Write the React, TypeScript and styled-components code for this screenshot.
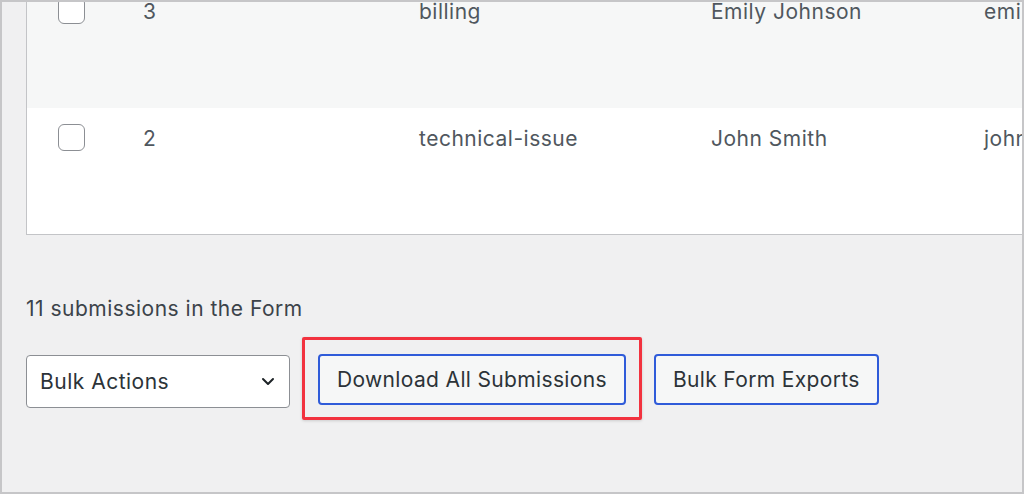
import React from 'react';
import styled, { createGlobalStyle } from 'styled-components';

const GlobalStyle = createGlobalStyle`
  html, body {
    margin: 0;
    padding: 0;
    background: #ffffff;
  }
  * {
    box-sizing: border-box;
  }
`;

const Frame = styled.div`
  width: 1024px;
  height: 494px;
  border: 2px solid #c6c6c8;
  background: #f0f0f1;
  overflow: hidden;
  padding-left: 24px;
  font-family: Inter, 'Noto Sans', 'Liberation Sans', sans-serif;
  font-size: 21px;
  letter-spacing: 0.5px;
`;

const Table = styled.div`
  width: 1100px;
  margin-top: -22px;
  border: 1px solid #c3c4c7;
  background: #ffffff;
`;

const Row = styled.div<{ $alt?: boolean }>`
  display: grid;
  grid-template-columns: 116px 276px 292px 273px 1fr;
  height: ${(p) => (p.$alt ? 127 : 126)}px;
  background: ${(p) => (p.$alt ? '#f6f7f7' : '#ffffff')};
`;

const Cell = styled.div`
  padding-top: 17px;
  line-height: 28px;
  color: #50575e;
  white-space: nowrap;
`;

const CheckCell = styled.div`
  padding-top: 16px;
  padding-left: 31px;
`;

const Checkbox = styled.span`
  display: block;
  width: 27px;
  height: 27px;
  border: 1.5px solid #8c8f94;
  border-radius: 6px;
  background: #ffffff;
`;

const Count = styled.div`
  margin-top: 60px;
  line-height: 28px;
  color: #3c434a;
`;

const Actions = styled.div`
  display: flex;
  align-items: flex-start;
  gap: 12px;
  margin-top: 14px;
`;

const Select = styled.div`
  margin-top: 18px;
  width: 264px;
  height: 53px;
  display: flex;
  align-items: center;
  justify-content: space-between;
  padding: 0 14px 0 13px;
  background: #ffffff;
  border: 1.5px solid #8c8f94;
  border-radius: 4px;
  color: #2c3338;
`;

const Highlight = styled.div`
  border: 3px solid #f2323f;
  border-radius: 2px;
  padding: 14px 13px 12px 13px;
  box-shadow: 0 1px 3px rgba(0, 0, 0, 0.15);
`;

const Button = styled.div<{ $offset?: number }>`
  margin-top: ${(p) => p.$offset ?? 0}px;
  height: 51px;
  display: flex;
  align-items: center;
  padding: 0 17px;
  border: 2px solid #2f5bd9;
  border-radius: 4px;
  background: #f6f7f7;
  color: #2c3338;
  letter-spacing: 0.35px;
  white-space: nowrap;
`;

const rows = [
  { id: '3', type: 'billing', name: 'Emily Johnson', email: 'emily@example.com', alt: true },
  { id: '2', type: 'technical-issue', name: 'John Smith', email: 'john@example.com', alt: false },
];

function Chevron(): JSX.Element {
  return (
    <svg width="14" height="9" viewBox="0 0 14 9" fill="none">
      <path d="M2 2l5 5 5-5" stroke="#1d2327" strokeWidth="2" strokeLinecap="round" strokeLinejoin="round" />
    </svg>
  );
}

export default function App(): JSX.Element {
  return (
    <>
      <GlobalStyle />
      <Frame>
        <Table>
          {rows.map((r) => (
            <Row key={r.id} $alt={r.alt}>
              <CheckCell>
                <Checkbox />
              </CheckCell>
              <Cell>{r.id}</Cell>
              <Cell>{r.type}</Cell>
              <Cell>{r.name}</Cell>
              <Cell>{r.email}</Cell>
            </Row>
          ))}
        </Table>
        <Count>11 submissions in the Form</Count>
        <Actions>
          <Select>
            Bulk Actions
            <Chevron />
          </Select>
          <Highlight>
            <Button>Download All Submissions</Button>
          </Highlight>
          <Button $offset={17}>Bulk Form Exports</Button>
        </Actions>
      </Frame>
    </>
  );
}
